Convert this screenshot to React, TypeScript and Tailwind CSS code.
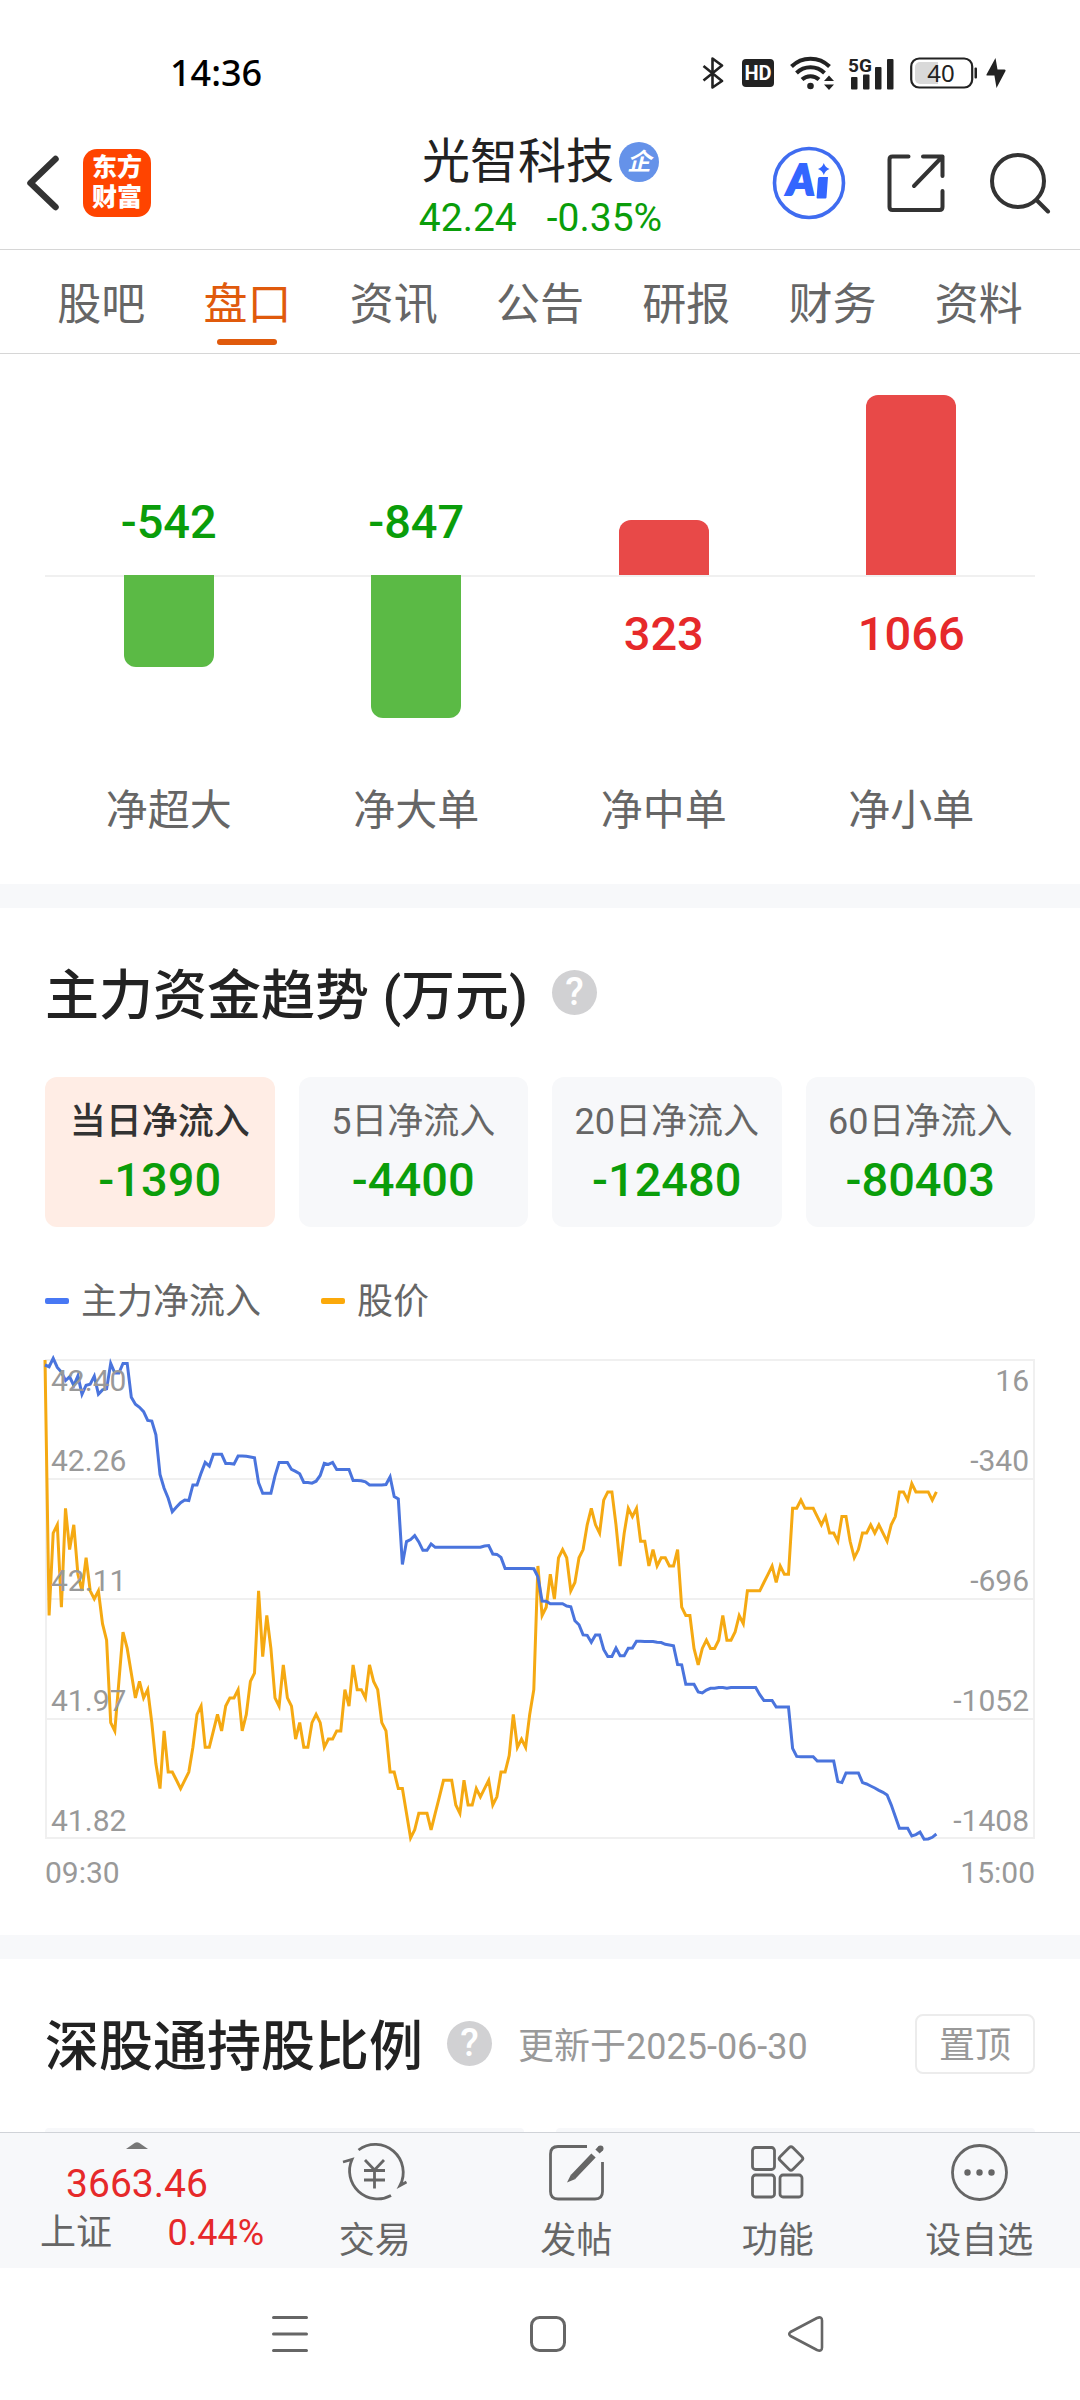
import React, { useState } from "react";

const FLOW_MAX = 16;
const FLOW_MIN = -1408;
const PRICE_MAX = 4240;
const PRICE_MIN = 4182;
const MINUTES = 241;
const CHART_W = 990;
const CHART_H = 480;

// main force net inflow, one value per minute (10k yuan)
const flowSeries = [
  1, -4, 21, -6, -20, -45, -34, -60, -31, -86, -59, -56, -32, -86, -73, -70, 6, -23, -23, 6,
  6, -95, -116, -125, -138, -164, -166, -207, -325, -366, -396, -436, -422, -409, -401, -403, -356, -356, -321, -289,
  -300, -265, -265, -265, -292, -292, -294, -270, -270, -271, -273, -275, -350, -381, -381, -381, -329, -289, -289, -289,
  -310, -316, -323, -349, -349, -351, -345, -328, -292, -295, -289, -310, -310, -310, -310, -343, -343, -344, -347, -356,
  -356, -356, -356, -355, -332, -391, -398, -593, -525, -519, -507, -526, -551, -551, -532, -542, -542, -542, -542, -542,
  -542, -542, -542, -542, -542, -542, -542, -538, -537, -562, -563, -572, -605, -605, -605, -605, -605, -605, -605, -606,
  -630, -702, -703, -710, -710, -710, -710, -717, -719, -761, -773, -803, -804, -825, -803, -803, -846, -867, -867, -842,
  -865, -865, -843, -842, -822, -822, -823, -823, -823, -825, -826, -831, -833, -835, -891, -892, -950, -950, -950, -973,
  -976, -967, -962, -962, -960, -960, -962, -960, -960, -960, -960, -960, -960, -960, -981, -998, -998, -998, -1018, -1018,
  -1018, -1018, -1141, -1165, -1166, -1166, -1166, -1166, -1179, -1179, -1179, -1179, -1179, -1240, -1243, -1214, -1214, -1214, -1214, -1243,
  -1247, -1253, -1259, -1266, -1272, -1280, -1309, -1344, -1379, -1379, -1379, -1402, -1398, -1390, -1412, -1411, -1406, -1396,
];

// share price in cents above PRICE_MIN, one value per minute
const priceSeries = [
  58, 27, 37, 38, 28, 40, 35, 38, 32, 30, 34, 30, 29, 30, 26, 24, 14, 13, 19, 25,
  23, 20, 17, 19, 17, 18, 14, 9, 6, 13, 8, 8, 7, 6, 7, 8, 11, 15, 16, 11,
  11, 13, 15, 13, 16, 17, 17, 18, 13, 15, 19, 20, 30, 22, 27, 23, 17, 16, 21, 17,
  16, 12, 14, 11, 11, 14, 15, 14, 11, 12, 12, 13, 13, 18, 16, 21, 18, 18, 17, 21,
  19, 18, 14, 13, 8, 8, 6, 6, 3, 0, 1, 3, 3, 3, 1, 3, 5, 7, 7, 7,
  4, 3, 7, 4, 4, 6, 5, 6, 7, 4, 5, 8, 8, 10, 15, 11, 12, 11, 15, 18,
  33, 27, 28, 32, 29, 34, 35, 34, 30, 31, 34, 35, 38, 40, 38, 37, 41, 42, 42, 38,
  33, 37, 40, 39, 40, 36, 36, 33, 35, 33, 34, 34, 33, 33, 35, 28, 27, 27, 23, 21,
  23, 24, 23, 23, 24, 27, 24, 24, 25, 27, 26, 30, 30, 30, 30, 31, 32, 33, 31, 33,
  32, 32, 40, 40, 41, 40, 40, 40, 39, 38, 39, 37, 37, 36, 39, 39, 36, 34, 35, 37,
  37, 38, 37, 38, 37, 36, 38, 39, 42, 42, 41, 43, 42, 42, 42, 42, 41, 42,
];

// y runs from 1 to CHART_H - 1, the middle of the outer grid lines
function toPoints(values: number[], min: number, max: number) {
  return values
    .map((v, i) => {
      const x = (i / MINUTES) * CHART_W;
      const y = 1 + ((max - v) / (max - min)) * (CHART_H - 2);
      return `${x.toFixed(1)},${y.toFixed(1)}`;
    })
    .join(" ");
}

const tabs = ["股吧", "盘口", "资讯", "公告", "研报", "财务", "资料"];

const orders = [
  { label: "净超大", value: -542 },
  { label: "净大单", value: -847 },
  { label: "净中单", value: 323 },
  { label: "净小单", value: 1066 },
];

const periods = [
  { label: "当日净流入", value: -1390 },
  { label: "5日净流入", value: -4400 },
  { label: "20日净流入", value: -12480 },
  { label: "60日净流入", value: -80403 },
];

const axisRows = [
  { price: "42.26", flow: "-340" },
  { price: "42.11", flow: "-696" },
  { price: "41.97", flow: "-1052" },
  { price: "41.82", flow: "-1408" },
];

function StatusBar() {
  return (
    <div className="flex h-[128px] items-center justify-between pt-[18px] pr-[74px] pl-[170px]">
      <span className="font-['Noto_Sans'] text-[36px] leading-[40px] font-medium text-black">14:36</span>
      <div className="flex items-center text-[#222]">
        <svg className="mr-[18px] h-8 w-[22px]" viewBox="0 0 22 32" fill="none" stroke="currentColor" strokeWidth="2.6" strokeLinejoin="round">
          <path d="M1.5 9 L20 24 L10.5 30.5 V1.5 L20 8.5 L1.5 23.5" />
        </svg>
        <svg className="mr-4 h-7 w-8" viewBox="0 0 32 28">
          <rect width="32" height="28" rx="4" fill="currentColor" />
          <text x="16" y="21" textAnchor="middle" fontSize="20" fontWeight="700" fontFamily="Roboto, sans-serif" fill="#fff">HD</text>
        </svg>
        <svg className="mr-[13px] h-[34px] w-[45px]" viewBox="0 0 45 34" fill="none" stroke="currentColor" strokeWidth="4">
          <path d="M1.5 10.5 A27 27 0 0 1 39.5 10.5" />
          <path d="M6.5 17 A20 20 0 0 1 34.5 17" />
          <path d="M12 23.5 A12.5 12.5 0 0 1 29 23.5" />
          <circle cx="20.5" cy="30" r="3.3" fill="currentColor" stroke="none" />
          <path d="M34 25 L39 19.5 L44 25 Z M34 28.5 L39 34 L44 28.5 Z" fill="currentColor" stroke="none" />
        </svg>
        <svg className="mr-4 h-[34px] w-[46px] overflow-visible" viewBox="0 0 46 34" fill="currentColor">
          <rect x="3" y="21" width="6.5" height="12.5" rx="1" />
          <rect x="15" y="18.5" width="6.5" height="15" rx="1" />
          <rect x="27" y="11" width="6.5" height="22.5" rx="1" />
          <rect x="39" y="3" width="6.5" height="30.5" rx="1" />
          <text x="0" y="16" fontSize="19" fontWeight="700" fontFamily="Roboto, sans-serif">5G</text>
        </svg>
        <svg className="mr-2 h-8 w-[68px]" viewBox="0 0 68 32">
          <rect x="1.2" y="1.5" width="61" height="29" rx="8" fill="none" stroke="currentColor" strokeWidth="2.2" />
          <path d="M10 5 H28 V27 H10 A5 5 0 0 1 5 22 V10 A5 5 0 0 1 10 5 Z" fill="#d9d9d9" />
          <rect x="64.5" y="10.5" width="2.5" height="11" rx="1" fill="currentColor" />
          <text x="31" y="24.5" textAnchor="middle" fontSize="24" fontFamily="'Noto Sans', sans-serif" fill="currentColor">40</text>
        </svg>
        <svg className="h-8 w-5" viewBox="0 0 20 32" fill="currentColor">
          <path d="M9.5 1 L0.5 17.5 Q0 18.5 1 18.5 H8.5 V19 L10.5 31 L19.5 14 Q20 12.5 18.5 12.5 H11.5 Z" />
        </svg>
      </div>
    </div>
  );
}

function Header() {
  return (
    <header className="grid h-[122px] grid-cols-[1fr_auto_1fr] items-center border-b border-[#d6d6d6] pr-[29px] pb-[2px] pl-[26px]">
      <div className="flex items-center pb-[10px]">
        <button aria-label="返回" className="mr-6">
          <svg className="h-[56px] w-[33px]" viewBox="0 0 33 56" fill="none" stroke="#333" strokeWidth="6.5" strokeLinecap="round" strokeLinejoin="round">
            <path d="M29.5 4 L4.5 28 L29.5 52" />
          </svg>
        </button>
        <a href="#home" className="flex size-[68px] flex-col items-center justify-center rounded-[14px] bg-[#ff4400] text-[25px] leading-[30px] font-black text-white">
          <span>东方</span>
          <span>财富</span>
        </a>
      </div>
      <div className="flex flex-col items-center pl-1">
        <h1 className="flex items-center text-[48px] leading-[60px] text-[#222]">
          光智科技
          <span className="ml-[5px] flex size-10 items-center justify-center rounded-full bg-[#6592e9] text-[24px] leading-[40px] font-bold text-white italic">企</span>
        </h1>
        <p className="flex gap-[30px] text-[39px] leading-[52px] text-[#0a9d0a]">
          <span>42.24</span>
          <span>-0.35%</span>
        </p>
      </div>
      <div className="flex items-center justify-end pb-[10px]">
        <button aria-label="Ai" className="mr-[41px]">
          <svg className="size-[74px]" viewBox="0 0 74 74">
            <circle cx="37" cy="37" r="34.5" fill="none" stroke="#3f6cf0" strokeWidth="3.6" />
            <text x="15" y="49" fontSize="42" fontWeight="900" fontStyle="italic" fontFamily="Lato, sans-serif" fill="#3366ff" stroke="#3366ff" strokeWidth="2">A</text>
            <path d="M47.5 31 H56 L54.5 51.5 Q54.4 52.5 53.4 52.5 H45.5 Q44.5 52.5 44.6 51.5 L46 32.5 Q46.2 31 47.5 31 Z" fill="#3366ff" />
            <path d="M51.8 17 Q53.2 21.6 57.5 23 Q53.2 24.4 51.8 29 Q50.4 24.4 46 23 Q50.4 21.6 51.8 17 Z" fill="#3366ff" />
          </svg>
        </button>
        <button aria-label="分享" className="mr-[42px]">
          <svg className="size-[60px]" viewBox="0 0 60 60" fill="none" stroke="#333" strokeWidth="4" strokeLinecap="round" strokeLinejoin="round">
            <path d="M21.5 3.5 H5.5 Q2.5 3.5 2.5 6.5 V54 Q2.5 57 5.5 57 H52.5 Q55.5 57 55.5 54 V38" />
            <path d="M36 3.5 H55.5 V23 M55.5 3.5 L27 33" />
          </svg>
        </button>
        <button aria-label="搜索">
          <svg className="size-[62px]" viewBox="0 0 62 62" fill="none" stroke="#333" strokeWidth="4" strokeLinecap="round">
            <circle cx="29" cy="29" r="26" />
            <path d="M47.5 48 L59 59.5" />
          </svg>
        </button>
      </div>
    </header>
  );
}

function Tabs() {
  const [active, setActive] = useState("盘口");
  return (
    <nav className="flex h-[104px] border-b border-[#d6d6d6] px-7">
      {tabs.map((tab) => (
        <button
          key={tab}
          onClick={() => setActive(tab)}
          className={`flex flex-1 flex-col items-center justify-end pb-2 text-[44px] leading-[60px] ${
            tab === active ? "text-[#e05a0c]" : "text-[#666]"
          }`}
        >
          {tab}
          <span className={`mt-1 h-[6px] w-[60px] rounded-full ${tab === active ? "bg-[#e05a0c]" : "bg-transparent"}`} />
        </button>
      ))}
    </nav>
  );
}

function OrderBars() {
  return (
    <section className="flex px-[45px] pb-[43px]">
      {orders.map(({ label, value }) => {
        const height = Math.round(Math.abs(value) * 0.169);
        return (
          <div key={label} className="flex flex-1 flex-col items-center">
            <div className="flex h-[221px] w-full flex-col items-center justify-end">
              {value > 0 ? (
                <div className="w-[90px] rounded-t-[12px] bg-[#e84948]" style={{ height }} />
              ) : (
                <span className="pb-[25px] text-[47px] leading-[56px] font-medium text-[#0a9d0a]">{value}</span>
              )}
            </div>
            <div className="flex h-[206px] w-full flex-col items-center border-t-2 border-[#f0f0f0]">
              {value < 0 ? (
                <div className="-mt-[2px] w-[90px] rounded-b-[12px] bg-[#5bba45]" style={{ height }} />
              ) : (
                <span className="pt-[29px] text-[47px] leading-[56px] font-medium text-[#e6292a]">{value}</span>
              )}
            </div>
            <span className="text-[42px] leading-[60px] text-[#666]">{label}</span>
          </div>
        );
      })}
    </section>
  );
}

function HelpButton() {
  return (
    <button aria-label="说明" className="flex size-[45px] items-center justify-center rounded-full bg-[#d1d1d3] text-[38px] leading-[45px] font-medium text-white">
      ?
    </button>
  );
}

function TrendChart() {
  return (
    <div className="mt-[30px]">
      <div className="relative h-[480px]">
        <svg className="absolute inset-0 h-full w-full overflow-visible" viewBox={`0 0 ${CHART_W} ${CHART_H}`} preserveAspectRatio="none" fill="none">
          <rect x="1" y="1" width={CHART_W - 2} height={CHART_H - 2} stroke="#f0f0f0" strokeWidth="2" />
          {[120, 240, 360].map((y) => (
            <line key={y} x1="0" x2={CHART_W} y1={y} y2={y} stroke="#f0f0f0" strokeWidth="2" />
          ))}
          <polyline points={toPoints(priceSeries, 0, PRICE_MAX - PRICE_MIN)} stroke="#f5a912" strokeWidth="3" vectorEffect="non-scaling-stroke" />
          <polyline points={toPoints(flowSeries, FLOW_MIN, FLOW_MAX)} stroke="#4a74dd" strokeWidth="3" vectorEffect="non-scaling-stroke" />
        </svg>
        <div className="relative flex h-full flex-col text-[30px] leading-[36px] text-[#999]">
          {axisRows.map((row, i) => (
            <div key={row.price} className="flex flex-1 flex-col justify-end px-[6px]">
              {i === 0 && (
                <div className="mb-auto flex justify-between pt-1">
                  <span>42.40</span>
                  <span>16</span>
                </div>
              )}
              <div className="flex justify-between">
                <span>{row.price}</span>
                <span>{row.flow}</span>
              </div>
            </div>
          ))}
        </div>
      </div>
      <div className="mt-4 flex justify-between text-[30px] leading-[36px] text-[#999]">
        <span>09:30</span>
        <span>15:00</span>
      </div>
    </div>
  );
}

function FundTrend() {
  const [selected, setSelected] = useState(0);
  return (
    <section className="border-t-[24px] border-[#f7f8fa] px-[45px] pt-[52px] pb-[44px]">
      <div className="flex items-center gap-6">
        <h2 className="text-[54px] leading-[74px] font-medium text-[#222]">主力资金趋势 (万元)</h2>
        <div className="pb-[10px]">
          <HelpButton />
        </div>
      </div>
      <div className="mt-[43px] flex gap-6">
        {periods.map((period, i) => (
          <button
            key={period.label}
            onClick={() => setSelected(i)}
            className={`flex h-[150px] flex-1 flex-col items-center justify-center rounded-[12px] ${
              i === selected ? "bg-[#ffede5]" : "bg-[#f7f8fa]"
            }`}
          >
            <span className={`text-[36px] leading-[56px] ${i === selected ? "font-medium text-[#333]" : "text-[#666]"}`}>{period.label}</span>
            <span className="text-[47px] leading-[60px] font-medium text-[#0a9d0a]">{period.value}</span>
          </button>
        ))}
      </div>
      <div className="mt-[48px] flex items-center gap-[60px] text-[36px] leading-[54px] text-[#666]">
        <div className="flex items-center gap-3">
          <i className="mb-[2px] h-[6px] w-6 rounded-[2px] bg-[#4878f4]" />
          主力净流入
        </div>
        <div className="flex items-center gap-3">
          <i className="mb-[2px] h-[6px] w-6 rounded-[2px] bg-[#fba90a]" />
          股价
        </div>
      </div>
      <TrendChart />
    </section>
  );
}

function StockConnect() {
  return (
    <section className="flex flex-1 flex-col justify-between border-t-[24px] border-[#f7f8fa] px-[45px] pt-[52px]">
      <div className="flex items-center">
        <h2 className="text-[54px] leading-[74px] font-medium text-[#222]">深股通持股比例</h2>
        <div className="mr-[26px] ml-6 pb-[10px]">
          <HelpButton />
        </div>
        <span className="pb-[2px] text-[36px] leading-[54px] text-[#999]">更新于2025-06-30</span>
        <div className="ml-auto pb-2">
          <button className="block h-[60px] w-[120px] rounded-[8px] border-2 border-[#ececec] text-[36px] leading-[60px] text-[#999]">置顶</button>
        </div>
      </div>
      <div className="flex gap-8">
        <div className="h-1 flex-1 rounded-t-[12px] bg-[#f7f8fa]" />
        <div className="h-1 flex-1 rounded-t-[12px] bg-[#f7f8fa]" />
      </div>
    </section>
  );
}

const actions = [
  {
    label: "交易",
    icon: (
      <>
        <path d="M17.5 8 A28 28 0 0 1 59 43.5 L65.5 40 M50 53.5 A28 28 0 0 1 11 17.5 L2 20" />
        <path d="M24 18 L33.5 28 L43 18 M23 28.5 H44 M23 38 H44 M33.5 28 V46.5" />
      </>
    ),
  },
  {
    label: "发帖",
    icon: (
      <>
        <path d="M44 4.5 H15 Q7.5 4.5 7.5 12 V49.5 Q7.5 57 15 57 H52 Q59.5 57 59.5 49.5 V20" />
        <path d="M50.5 13.5 L30 35 M54.5 9.5 L57.5 6.5" strokeWidth="6" />
        <circle cx="57.5" cy="6.5" r="3" fill="#666" stroke="none" />
        <path d="M28 32.5 L32.5 37 L24 40.5 Z" fill="#666" stroke="none" />
      </>
    ),
  },
  {
    label: "功能",
    icon: (
      <>
        <rect x="8.5" y="5.5" width="22" height="22" rx="3" />
        <rect x="8.5" y="33" width="22" height="22" rx="3" />
        <rect x="36" y="33" width="22" height="22" rx="3" />
        <rect x="38" y="7.5" width="18" height="18" rx="2.5" transform="rotate(45 47 16.5)" />
      </>
    ),
  },
  {
    label: "设自选",
    icon: (
      <>
        <circle cx="33.5" cy="30.5" r="27" />
        <g fill="#666" stroke="none">
          <circle cx="21.5" cy="30.5" r="3.2" />
          <circle cx="33.5" cy="30.5" r="3.2" />
          <circle cx="45.5" cy="30.5" r="3.2" />
        </g>
      </>
    ),
  },
];

function BottomBar() {
  return (
    <footer>
      <div className="flex h-[136px] border-t border-[#d0d3d8] bg-[#f7f8fa]">
        <button className="flex w-[274px] flex-col items-center pt-[9px]">
          <svg className="h-[7px] w-[22px]" viewBox="0 0 22 7" fill="#777">
            <path d="M0 7 L9 0.8 Q11 -0.5 13 0.8 L22 7 Z" />
          </svg>
          <span className="mt-[11px] text-[39px] leading-[48px] text-[#e6292a]">3663.46</span>
          <span className="flex w-full justify-between pr-[10px] pl-10 text-[36px] leading-[50px]">
            <span className="text-[#666]">上证</span>
            <span className="text-[#e6292a]">0.44%</span>
          </span>
        </button>
        {actions.map((action) => (
          <button key={action.label} className="flex flex-1 flex-col items-center pt-[9px] text-[36px] leading-[54px] text-[#666]">
            <svg className="mb-[10px] h-[62px] w-[67px]" viewBox="0 0 67 62" fill="none" stroke="#666" strokeWidth="2.8">
              {action.icon}
            </svg>
            {action.label}
          </button>
        ))}
      </div>
      <div className="flex h-[132px] items-center justify-center gap-[222px] pl-4">
        <button aria-label="最近任务">
          <svg className="size-9" viewBox="0 0 36 36" stroke="#666" strokeWidth="3" strokeLinecap="round">
            <path d="M1.5 1.5 H34.5 M1.5 18 H34.5 M1.5 34.5 H34.5" />
          </svg>
        </button>
        <button aria-label="主屏幕">
          <svg className="size-9" viewBox="0 0 36 36" fill="none" stroke="#666" strokeWidth="3">
            <rect x="1.5" y="1.5" width="33" height="33" rx="8" />
          </svg>
        </button>
        <button aria-label="后退">
          <svg className="size-9" viewBox="0 0 36 36" fill="none" stroke="#666" strokeWidth="2.6" strokeLinejoin="round">
            <path d="M2.5 16 L29 2 Q34 0 34 4.5 V31.5 Q34 36 29 34 L2.5 20 Q0 18 2.5 16 Z" />
          </svg>
        </button>
      </div>
    </footer>
  );
}

export default function App() {
  return (
    <div className="flex min-h-screen flex-col bg-white font-[Roboto,'Noto_Sans_CJK_SC',sans-serif]">
      <StatusBar />
      <Header />
      <Tabs />
      <OrderBars />
      <FundTrend />
      <StockConnect />
      <BottomBar />
    </div>
  );
}
